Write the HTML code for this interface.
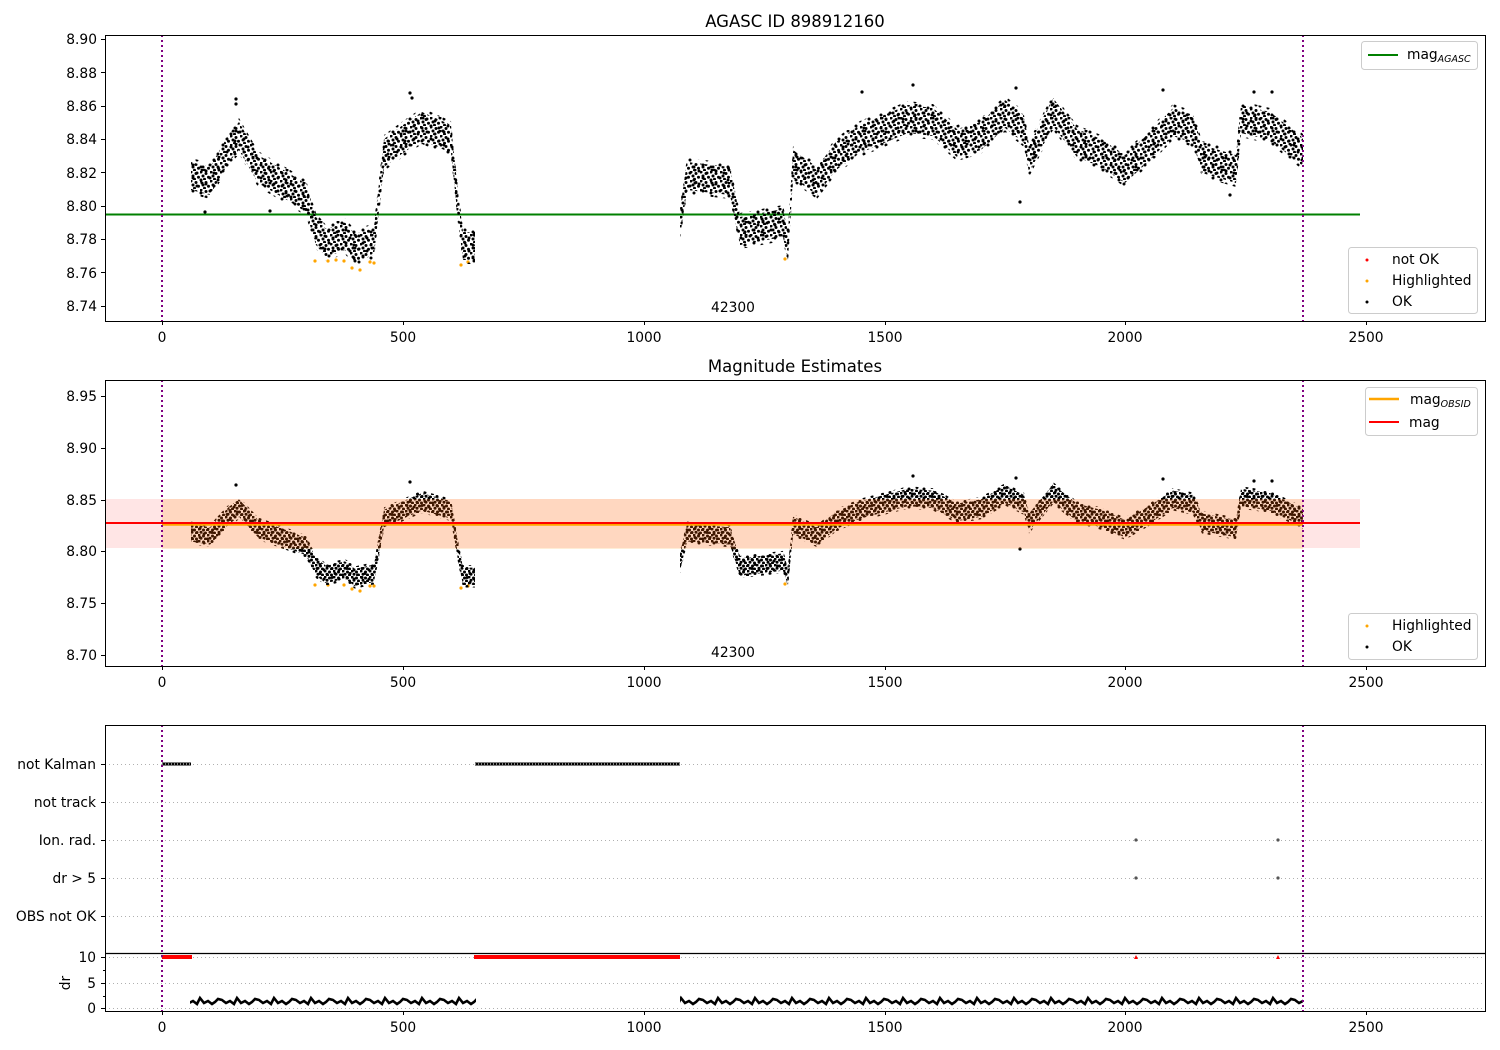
<!DOCTYPE html>
<html><head><meta charset="utf-8">
<style>
html,body{margin:0;padding:0;background:#fff;}
svg{display:block;font-family:"DejaVu Sans","Liberation Sans",sans-serif;}
text{fill:#000;}
</style></head>
<body>
<svg width="1500" height="1050" viewBox="0 0 1500 1050" xmlns="http://www.w3.org/2000/svg" xmlns:xlink="http://www.w3.org/1999/xlink">
<defs>
<pattern id="dots" x="0" y="0" width="10" height="9" patternUnits="userSpaceOnUse">
<circle cx="1" cy="1" r="1.5" fill="#000"/><circle cx="6" cy="2.5" r="1.5" fill="#000"/>
<circle cx="3" cy="5" r="1.5" fill="#000"/><circle cx="8.5" cy="6.2" r="1.5" fill="#000"/>
<circle cx="4.5" cy="8.2" r="1.5" fill="#000"/>
</pattern>
<pattern id="sparse" x="0" y="0" width="17" height="13" patternUnits="userSpaceOnUse">
<circle cx="2" cy="2" r="1.5" fill="#000"/><circle cx="10" cy="4" r="1.5" fill="#000"/>
<circle cx="6" cy="9" r="1.5" fill="#000"/><circle cx="14" cy="11" r="1.5" fill="#000"/>
<circle cx="15" cy="1" r="1.5" fill="#000"/>
</pattern>
<pattern id="dots2" x="0" y="0" width="9" height="6" patternUnits="userSpaceOnUse">
<circle cx="1" cy="1" r="1.5" fill="#000"/><circle cx="5.5" cy="2" r="1.5" fill="#000"/>
<circle cx="3" cy="4.3" r="1.5" fill="#000"/><circle cx="7.5" cy="5" r="1.5" fill="#000"/>
</pattern>
<pattern id="sparse2" x="0" y="0" width="15" height="9" patternUnits="userSpaceOnUse">
<circle cx="2" cy="1.5" r="1.5" fill="#000"/><circle cx="9" cy="3" r="1.5" fill="#000"/>
<circle cx="5" cy="6.5" r="1.5" fill="#000"/><circle cx="12.5" cy="8" r="1.5" fill="#000"/>
</pattern>
<pattern id="wave" x="0" y="995" width="37" height="14" patternUnits="userSpaceOnUse">
<path d="M0 5 L4 8 L8 6 L12 9 L15 3 L19 8 L23 6 L27 9 L30 7 L33 4 L37 5" stroke="#000" stroke-width="2.6" fill="none" stroke-linecap="round"/>
</pattern>
<path id="env" d="M191 162 L210 167 L229 134 L239 122 L258 155 L287 172 L306 184 L316 217 L326 229 L345 222 L355 234 L374 227 L384 139 L403 125 L422 112 L451 125 L458 192 L463 232 L475 232 L475 260 L463 260 L458 220 L451 153 L422 140 L403 153 L384 167 L374 255 L355 262 L345 250 L326 257 L316 245 L306 212 L287 200 L258 183 L239 150 L229 162 L210 195 L191 190 Z M680 209 L687 162 L730 167 L740 217 L783 209 L788 232 L793 150 L817 167 L836 142 L860 125 L884 115 L908 105 L933 108 L957 129 L981 122 L1005 100 L1024 115 L1029 145 L1053 98 L1077 129 L1101 139 L1125 155 L1149 133 L1173 108 L1193 115 L1202 145 L1236 155 L1241 105 L1270 112 L1303 138 L1303 166 L1270 140 L1241 133 L1236 183 L1202 173 L1193 143 L1173 136 L1149 161 L1125 183 L1101 167 L1077 157 L1053 126 L1029 173 L1024 143 L1005 128 L981 150 L957 157 L933 136 L908 133 L884 143 L860 153 L836 170 L817 195 L793 178 L788 260 L783 237 L740 245 L730 195 L687 190 L680 237 Z"/>
<path id="envw" d="M191 158 L210 163 L229 130 L239 118 L258 151 L287 168 L306 180 L316 213 L326 225 L345 218 L355 230 L374 223 L384 135 L403 121 L422 108 L451 121 L458 188 L463 228 L475 228 L475 264 L463 264 L458 224 L451 157 L422 144 L403 157 L384 171 L374 259 L355 266 L345 254 L326 261 L316 249 L306 216 L287 204 L258 187 L239 154 L229 166 L210 199 L191 194 Z M680 205 L687 158 L730 163 L740 213 L783 205 L788 228 L793 146 L817 163 L836 138 L860 121 L884 111 L908 101 L933 104 L957 125 L981 118 L1005 96 L1024 111 L1029 141 L1053 94 L1077 125 L1101 135 L1125 151 L1149 129 L1173 104 L1193 111 L1202 141 L1236 151 L1241 101 L1270 108 L1303 134 L1303 170 L1270 144 L1241 137 L1236 187 L1202 177 L1193 147 L1173 140 L1149 165 L1125 187 L1101 171 L1077 161 L1053 130 L1029 177 L1024 147 L1005 132 L981 154 L957 161 L933 140 L908 137 L884 147 L860 157 L836 174 L817 199 L793 182 L788 264 L783 241 L740 249 L730 199 L687 194 L680 241 Z"/>
<clipPath id="c1"><use xlink:href="#env" href="#env"/></clipPath>
<clipPath id="c1w"><use xlink:href="#envw" href="#envw"/></clipPath>
<clipPath id="c2"><use xlink:href="#env" href="#env" transform="matrix(1,0,0,0.6208,0,423.6)"/></clipPath>
<clipPath id="c2w"><use xlink:href="#envw" href="#envw" transform="matrix(1,0,0,0.6208,0,423.6)"/></clipPath>
</defs>
<rect width="1500" height="1050" fill="#fff"/>

<!-- plot1 data -->
<line x1="105" y1="214.5" x2="1360" y2="214.5" stroke="green" stroke-width="2"/>
<g fill="orange">
<circle cx="315" cy="261" r="1.6"/><circle cx="328" cy="261" r="1.6"/><circle cx="336" cy="260" r="1.6"/><circle cx="344" cy="261" r="1.6"/><circle cx="352" cy="268" r="1.6"/><circle cx="360" cy="270" r="1.6"/><circle cx="370" cy="262" r="1.6"/><circle cx="374" cy="263" r="1.6"/><circle cx="461" cy="265" r="1.6"/><circle cx="468" cy="262" r="1.6"/><circle cx="785" cy="259" r="1.6"/>
</g>
<rect x="180" y="90" width="1130" height="180" fill="url(#sparse)" clip-path="url(#c1w)"/>
<rect x="180" y="90" width="1130" height="180" fill="url(#dots)" clip-path="url(#c1)"/>
<g fill="#000">
<circle cx="236" cy="99" r="1.6"/><circle cx="236" cy="104" r="1.6"/><circle cx="410" cy="93" r="1.6"/><circle cx="412" cy="98" r="1.6"/><circle cx="913" cy="85" r="1.6"/><circle cx="1020" cy="202" r="1.6"/><circle cx="1163" cy="90" r="1.6"/><circle cx="1016" cy="88" r="1.6"/><circle cx="1254" cy="92" r="1.6"/><circle cx="1272" cy="92" r="1.6"/><circle cx="205" cy="212" r="1.6"/><circle cx="270" cy="211" r="1.6"/><circle cx="1230" cy="195" r="1.6"/><circle cx="862" cy="92" r="1.6"/>
</g>

<!-- plot2 data -->
<g fill="orange">
<circle cx="315" cy="585" r="1.6"/><circle cx="328" cy="585" r="1.6"/><circle cx="344" cy="585" r="1.6"/><circle cx="352" cy="589" r="1.6"/><circle cx="360" cy="591" r="1.6"/><circle cx="370" cy="586" r="1.6"/><circle cx="374" cy="586" r="1.6"/><circle cx="461" cy="588" r="1.6"/><circle cx="468" cy="586" r="1.6"/><circle cx="785" cy="584" r="1.6"/>
</g>
<rect x="180" y="470" width="1130" height="130" fill="url(#sparse2)" clip-path="url(#c2w)"/>
<rect x="180" y="470" width="1130" height="130" fill="url(#dots2)" clip-path="url(#c2)"/>
<g fill="#000">
<circle cx="236" cy="485" r="1.6"/><circle cx="410" cy="482" r="1.6"/><circle cx="913" cy="476" r="1.6"/><circle cx="1020" cy="549" r="1.6"/><circle cx="1163" cy="479" r="1.6"/><circle cx="1016" cy="478" r="1.6"/><circle cx="1254" cy="481" r="1.6"/><circle cx="1272" cy="481" r="1.6"/>
</g>
<rect x="105" y="499" width="1255" height="49" fill="#ff0000" fill-opacity="0.1"/>
<rect x="162" y="499" width="1141" height="50" fill="#ff8c00" fill-opacity="0.16"/>
<line x1="162" y1="524.5" x2="1303" y2="524.5" stroke="orange" stroke-width="2.5"/>
<line x1="105" y1="523" x2="1360" y2="523" stroke="red" stroke-width="2"/>

<!-- plot3 -->
<g stroke="#b0b0b0" stroke-width="1" stroke-dasharray="1,3">
<line x1="105" y1="764.5" x2="1485" y2="764.5"/><line x1="105" y1="802.5" x2="1485" y2="802.5"/>
<line x1="105" y1="840.5" x2="1485" y2="840.5"/><line x1="105" y1="878.5" x2="1485" y2="878.5"/>
<line x1="105" y1="916.5" x2="1485" y2="916.5"/><line x1="105" y1="957.5" x2="1485" y2="957.5"/>
<line x1="105" y1="983.5" x2="1485" y2="983.5"/><line x1="105" y1="1008.5" x2="1485" y2="1008.5"/>
</g>
<line x1="162" y1="764" x2="191" y2="764" stroke="#000" stroke-width="3"/>
<line x1="475" y1="764" x2="680" y2="764" stroke="#000" stroke-width="3"/>
<line x1="162" y1="764" x2="191" y2="764" stroke="#fff" stroke-width="1" stroke-dasharray="1,2"/>
<line x1="475" y1="764" x2="680" y2="764" stroke="#fff" stroke-width="1" stroke-dasharray="1,2"/>
<g fill="#555"><circle cx="1136" cy="840" r="1.6"/><circle cx="1278" cy="840" r="1.6"/><circle cx="1136" cy="878" r="1.6"/><circle cx="1278" cy="878" r="1.6"/></g>
<line x1="162" y1="957" x2="192" y2="957" stroke="red" stroke-width="4"/>
<line x1="474" y1="957" x2="680" y2="957" stroke="red" stroke-width="4"/>
<path d="M1134 959 l2 -4 l2 4z M1276 959 l2 -4 l2 4z" fill="red"/>
<rect x="190" y="995" width="286" height="14" fill="url(#wave)"/>
<rect x="680" y="995" width="623" height="14" fill="url(#wave)"/>

<!-- purple lines -->
<g stroke="purple" stroke-width="2" stroke-dasharray="2,3">
<line x1="162" y1="35" x2="162" y2="321"/><line x1="1303" y1="35" x2="1303" y2="321"/>
<line x1="162" y1="380" x2="162" y2="666"/><line x1="1303" y1="380" x2="1303" y2="666"/>
<line x1="162" y1="725" x2="162" y2="1011"/><line x1="1303" y1="725" x2="1303" y2="1011"/>
</g>

<!-- titles -->
<text x="795" y="27" font-size="16.5" text-anchor="middle">AGASC ID 898912160</text>
<text x="795" y="372" font-size="16.5" text-anchor="middle">Magnitude Estimates</text>
<text x="733" y="312" font-size="13.8" text-anchor="middle">42300</text>
<text x="733" y="657" font-size="13.8" text-anchor="middle">42300</text>
<g font-size="13.8" text-anchor="end">
<text x="97" y="44">8.90</text><text x="97" y="78">8.88</text><text x="97" y="111">8.86</text>
<text x="97" y="144">8.84</text><text x="97" y="178">8.82</text><text x="97" y="211">8.80</text>
<text x="97" y="244">8.78</text><text x="97" y="278">8.76</text><text x="97" y="311">8.74</text>
<text x="97" y="401">8.95</text><text x="97" y="453">8.90</text><text x="97" y="505">8.85</text>
<text x="97" y="556">8.80</text><text x="97" y="608">8.75</text><text x="97" y="660">8.70</text>
<text x="96" y="769">not Kalman</text><text x="96" y="807">not track</text><text x="96" y="845">Ion. rad.</text>
<text x="96" y="883">dr &gt; 5</text><text x="96" y="921">OBS not OK</text>
<text x="96" y="962">10</text><text x="96" y="988">5</text><text x="96" y="1013">0</text>
</g>
<text transform="translate(70,983) rotate(-90)" font-size="13.8" text-anchor="middle">dr</text>
<g font-size="13.8" text-anchor="middle">
<text x="162" y="342">0</text><text x="403" y="342">500</text><text x="644" y="342">1000</text><text x="885" y="342">1500</text><text x="1125" y="342">2000</text><text x="1366" y="342">2500</text>
<text x="162" y="687">0</text><text x="403" y="687">500</text><text x="644" y="687">1000</text><text x="885" y="687">1500</text><text x="1125" y="687">2000</text><text x="1366" y="687">2500</text>
<text x="162" y="1032">0</text><text x="403" y="1032">500</text><text x="644" y="1032">1000</text><text x="885" y="1032">1500</text><text x="1125" y="1032">2000</text><text x="1366" y="1032">2500</text>
</g>
<g stroke="#000" stroke-width="1">
<path d="M101 39.5H105M101 72.5H105M101 106.5H105M101 139.5H105M101 172.5H105M101 206.5H105M101 239.5H105M101 272.5H105M101 306.5H105
M101 396.5H105M101 448.5H105M101 500.5H105M101 551.5H105M101 603.5H105M101 655.5H105
M101 764.5H105M101 802.5H105M101 840.5H105M101 878.5H105M101 916.5H105M101 957.5H105M101 983.5H105M101 1008.5H105M103 970.5H105M103 996.5H105
M162.5 321V325M403.5 321V325M644.5 321V325M885.5 321V325M1125.5 321V325M1366.5 321V325
M162.5 666V670M403.5 666V670M644.5 666V670M885.5 666V670M1125.5 666V670M1366.5 666V670
M162.5 1011V1015M403.5 1011V1015M644.5 1011V1015M885.5 1011V1015M1125.5 1011V1015M1366.5 1011V1015" fill="none"/>
</g>
<rect x="105.5" y="35.5" width="1380" height="286" fill="none" stroke="#000"/>
<rect x="105.5" y="380.5" width="1380" height="286" fill="none" stroke="#000"/>
<rect x="105.5" y="725.5" width="1380" height="286" fill="none" stroke="#000"/>
<line x1="105" y1="953.5" x2="1485" y2="953.5" stroke="#000" stroke-width="1.2"/>
<!-- legends -->
<rect x="1361.5" y="41.5" width="116" height="28" rx="3" fill="#fff" fill-opacity="0.8" stroke="#ccc"/>
<line x1="1368" y1="55" x2="1398" y2="55" stroke="green" stroke-width="2"/>
<text x="1407" y="59" font-size="13.8">mag<tspan font-size="9.5" font-style="italic" dy="3">AGASC</tspan></text>
<rect x="1348.5" y="247.5" width="129" height="66" rx="3" fill="#fff" fill-opacity="0.8" stroke="#ccc"/>
<circle cx="1367" cy="260" r="1.5" fill="red"/><text x="1392" y="264" font-size="13.8">not OK</text>
<circle cx="1367" cy="281" r="1.5" fill="orange"/><text x="1392" y="285" font-size="13.8">Highlighted</text>
<circle cx="1367" cy="302" r="1.5" fill="#000"/><text x="1392" y="306" font-size="13.8">OK</text>
<rect x="1365.5" y="387.5" width="112" height="48" rx="3" fill="#fff" fill-opacity="0.8" stroke="#ccc"/>
<line x1="1369" y1="399" x2="1399" y2="399" stroke="orange" stroke-width="2.5"/>
<text x="1410" y="404" font-size="13.8">mag<tspan font-size="9.5" font-style="italic" dy="3">OBSID</tspan></text>
<line x1="1369" y1="422" x2="1399" y2="422" stroke="red" stroke-width="2"/>
<text x="1409" y="427" font-size="13.8">mag</text>
<rect x="1348.5" y="613.5" width="129" height="46" rx="3" fill="#fff" fill-opacity="0.8" stroke="#ccc"/>
<circle cx="1367" cy="626" r="1.5" fill="orange"/><text x="1392" y="630" font-size="13.8">Highlighted</text>
<circle cx="1367" cy="647" r="1.5" fill="#000"/><text x="1392" y="651" font-size="13.8">OK</text>
</svg>
</body></html>
